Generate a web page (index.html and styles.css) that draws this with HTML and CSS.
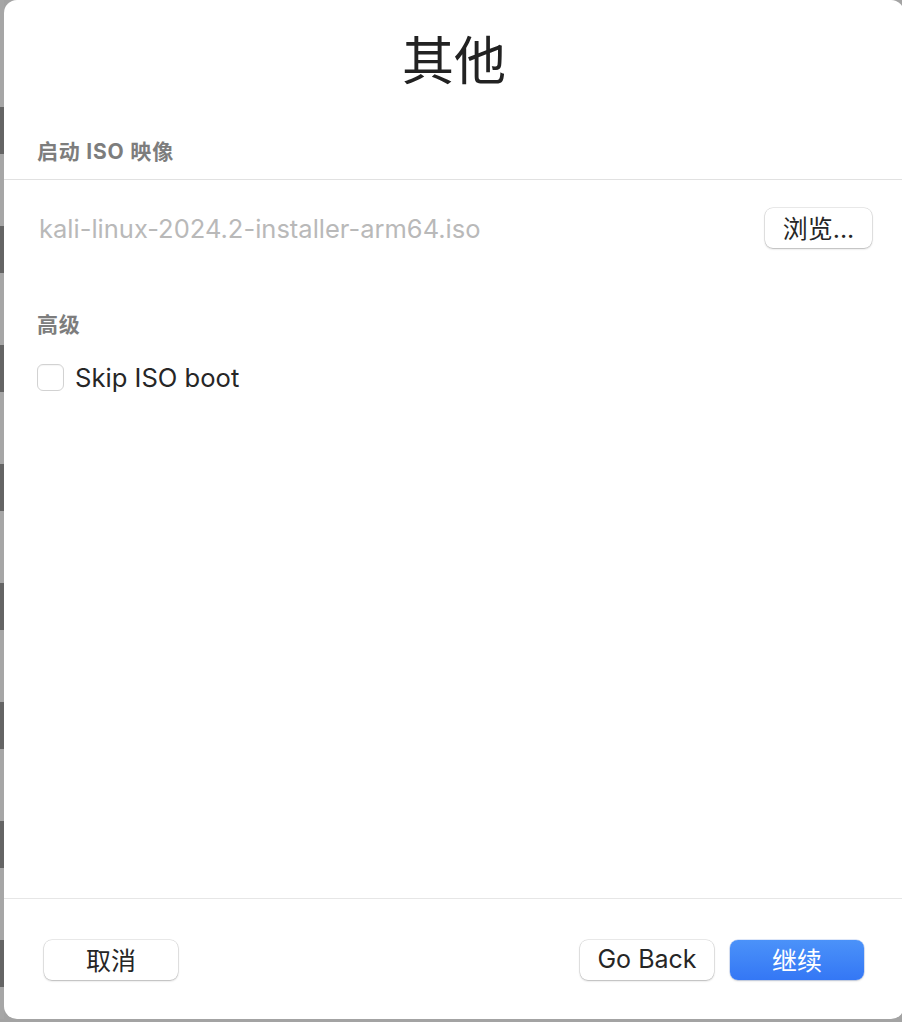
FILE: index.html
```html
<!DOCTYPE html>
<html lang="zh-CN">
<head>
<meta charset="utf-8">
<title>其他</title>
<link rel="stylesheet" href="styles.css">
</head>
<body>
<div class="desk">
  <div class="edge"></div>
  <div class="dialog">
    <h1 class="title">其他</h1>
    <div class="section-label first">启动 ISO 映像</div>
    <div class="divider"></div>
    <div class="file-row">
      <span class="file-name">kali-linux-2024.2-installer-arm64.iso</span>
      <button class="btn browse">浏览...</button>
    </div>
    <div class="section-label second">高级</div>
    <label class="check-row">
      <span class="checkbox"></span>
      <span class="check-text">Skip ISO boot</span>
    </label>
    <div class="spacer"></div>
    <div class="divider"></div>
    <div class="footer">
      <button class="btn wide">取消</button>
      <div class="footer-right">
        <button class="btn wide">Go Back</button>
        <button class="btn wide primary">继续</button>
      </div>
    </div>
  </div>
</div>
</body>
</html>
```
FILE: styles.css
```css
html, body {
  margin: 0;
  padding: 0;
  height: 100%;
  overflow: hidden;
}
body {
  background: #8d8d8d;
  font-family: Inter, "Noto Sans CJK SC", sans-serif;
  color: #262626;
}
.desk {
  display: flex;
  height: 1022px;
  align-items: flex-start;
  background: #a3a3a3;
}
.edge {
  width: 4px;
  height: 1019px;
  flex: none;
  background: repeating-linear-gradient(to bottom, #a6a6a6 0, #a6a6a6 72px, #646464 72px, #646464 119px);
  background-position: 0 35px;
}
.dialog {
  width: 900px;
  height: 1019px;
  flex: none;
  background: #ffffff;
  border-radius: 13px;
  display: flex;
  flex-direction: column;
  box-sizing: border-box;
}
.title {
  margin: 26px 0 0;
  text-align: center;
  font-family: "Noto Sans CJK SC", sans-serif;
  font-size: 52px;
  line-height: 64px;
  font-weight: 400;
  color: #222222;
}
.section-label {
  font-family: Inter, "Noto Sans CJK SC", sans-serif;
  font-weight: 700;
  font-size: 21px;
  line-height: 24px;
  color: #7d7d7d;
  padding-left: 33px;
  letter-spacing: 0.8px;
}
.section-label.first { margin-top: 50px; }
.section-label.second { margin-top: 65px; }
.divider {
  height: 1px;
  background: #e1e1e1;
  margin-top: 15px;
}
.spacer { flex: 1; }
.spacer + .divider { margin-top: 0; background: #e6e6e6; }
.file-row {
  margin-top: 28px;
  height: 40px;
  display: flex;
  align-items: center;
  justify-content: space-between;
  padding: 0 32px 0 35px;
}
.file-name {
  font-size: 25.5px;
  color: #b9b9b9;
}
.btn {
  font-family: Inter, "Noto Sans CJK SC", sans-serif;
  height: 40px;
  border: none;
  border-radius: 8px;
  background: #ffffff;
  color: #262626;
  box-shadow: 0 0 0 0.5px rgba(0, 0, 0, 0.16), 0 1px 2px rgba(0, 0, 0, 0.22);
  padding: 0 0 3px;
  font-size: 24px;
}
.browse {
  width: 107px;
  font-size: 25px;
}
.check-row {
  margin-top: 27px;
  padding-left: 33px;
  display: flex;
  align-items: center;
  gap: 11px;
  height: 27px;
}
.checkbox {
  width: 25px;
  height: 25px;
  border: 1px solid #d2d2d2;
  border-radius: 6px;
  background: #ffffff;
  box-shadow: inset 0 1px 1px rgba(0, 0, 0, 0.04);
}
.check-text {
  font-size: 25.6px;
  color: #262626;
}
.footer {
  display: flex;
  justify-content: space-between;
  align-items: center;
  padding: 41px 40px 39px;
}
.footer-right {
  display: flex;
  gap: 16px;
}
.wide {
  width: 134px;
  font-size: 25px;
}
.primary {
  background: linear-gradient(to bottom, #4b92f9, #3477f5);
  color: #ffffff;
  box-shadow: 0 0 0 0.5px rgba(40, 100, 220, 0.3), 0 1px 2px rgba(0, 0, 0, 0.18);
}
```
